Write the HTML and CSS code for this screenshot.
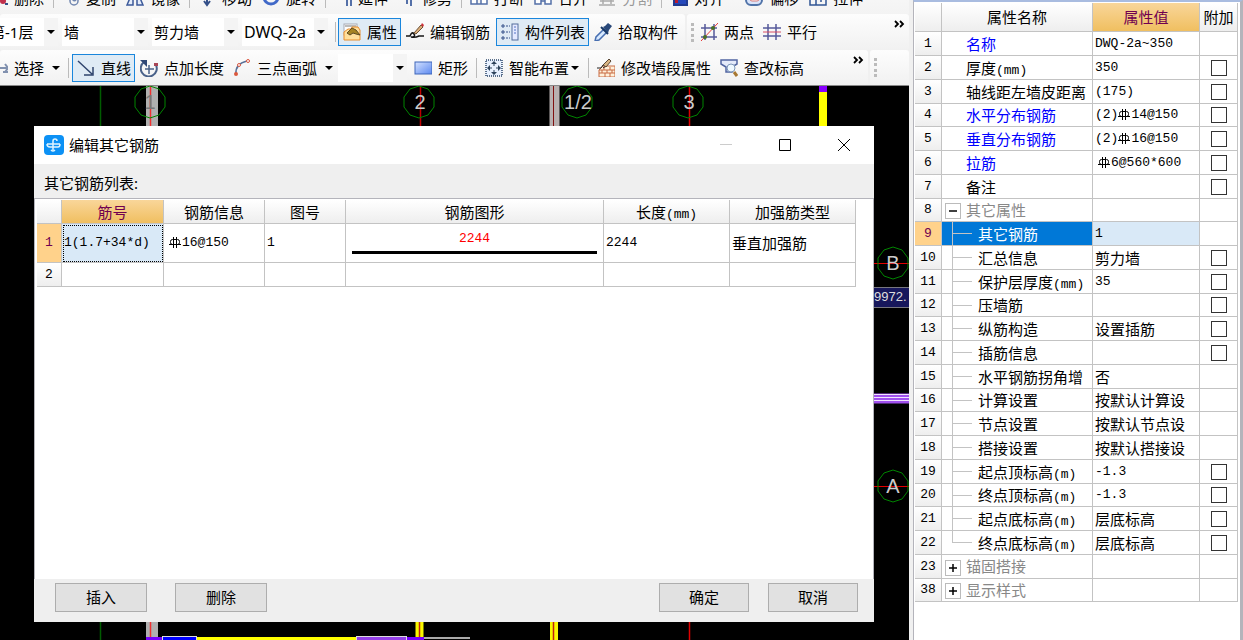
FILE: index.html
```html
<!DOCTYPE html>
<html lang="zh-CN">
<head>
<meta charset="utf-8">
<title>编辑其它钢筋</title>
<link rel="stylesheet" href="styles.css">
</head>
<body>
<svg class="defs" aria-hidden="true">
  <symbol id="rebar" viewBox="0 0 12 12"><path d="M4.500 1V12M7.500 1V12M0 8.500H12" fill="none" stroke="currentColor"/><rect x="1.500" y="3.500" width="9" height="5" rx="2" fill="none" stroke="currentColor"/></symbol>
  <symbol id="more" viewBox="0 0 12 8"><path d="M1 1l3 3-3 3M6 1l3 3-3 3" fill="none" stroke="#000" stroke-width="1.800"/></symbol>
</svg>
<div class="app">
  <main class="workspace">
    <header class="toolbars">
      <div class="clip">
        <div class="bar bar-edit">
          <button class="tool"><svg class="icon" viewBox="0 0 18 18"><path d="M4 3l9 9" stroke="#345089" stroke-width="2"/><circle cx="13" cy="12" r="3" fill="#c0304c"/><path d="M15 14h3v2h-3z" fill="#345089"/></svg>删除</button>
          <span class="sep"></span>
          <button class="tool"><svg class="icon" viewBox="0 0 18 18"><path d="M8 5a4 4 0 0 1 8 0v7a4 4 0 0 1-8 0zM11 7v4a2 2 0 0 0 3 0" fill="none" stroke="#7187b0" stroke-width="1.500"/></svg>复制</button>
          <button class="tool"><svg class="icon" viewBox="0 0 18 18"><path d="M7 2v14H1zM11 2v14h6z" fill="#e4ecfa" stroke="#3c5a9a" stroke-width="1.500"/></svg>镜像</button>
          <span class="sep"></span>
          <button class="tool"><svg class="icon" viewBox="0 0 18 18"><path d="M9 0v16M6 12l3 4 3-4" fill="none" stroke="#345089" stroke-width="2"/></svg>移动</button>
          <button class="tool"><svg class="icon" viewBox="0 0 18 18"><circle cx="9" cy="8" r="7" fill="none" stroke="#4169c8" stroke-width="3"/></svg>旋转</button>
          <span class="sep"></span>
          <button class="tool"><svg class="icon" viewBox="0 0 18 18"><path d="M13 2v15M17 2v15" stroke="#5470a8" stroke-width="2"/></svg>延伸</button>
          <button class="tool"><svg class="icon" viewBox="0 0 18 18"><path d="M9 2v13M13 2v15" stroke="#5470a8" stroke-width="2"/></svg>修剪</button>
          <span class="sep"></span>
          <button class="tool"><svg class="icon" viewBox="0 0 18 18"><path d="M1 5h6v10H1zM11 5h6v10h-6zM7 15h4" fill="#fff" stroke="#5470a8" stroke-width="1.500"/></svg>打断</button>
          <button class="tool"><svg class="icon" viewBox="0 0 18 18"><path d="M1 5h6v10H1zM11 5h6v10h-6zM7 12h4" fill="#fff" stroke="#5470a8" stroke-width="1.500"/></svg>合并</button>
          <button class="tool" disabled><svg class="icon" viewBox="0 0 18 18"><path d="M1 16h16M2 12h14M5 5v10M13 5v10" stroke="#aaa" stroke-width="1.500"/></svg>分割</button>
          <span class="sep"></span>
          <button class="tool"><svg class="icon" viewBox="0 0 18 18"><path d="M4 2v14h13V2z" fill="#fff" stroke="#203a90" stroke-width="2"/><path d="M5 11h11v4H5z" fill="#2548bb"/><path d="M5 2h3v12H5z" fill="#b81c30"/></svg>对齐</button>
          <button class="tool gap"><svg class="icon" viewBox="0 0 18 18"><rect x="1" y="4" width="16" height="12" rx="5" fill="#d9e4fa" stroke="#5073a8" stroke-width="2"/><rect x="5" y="7" width="9" height="5" rx="2" fill="#fff" stroke="#d87a78"/></svg>偏移</button>
          <button class="tool"><svg class="icon" viewBox="0 0 18 18"><path d="M1 3v13h16V3M7 10v6M12 9v4" fill="none" stroke="#315694" stroke-width="1.500"/></svg>拉伸</button>
        </div>
      </div>

      <div class="bar bar-build">
        <div class="strip">
          <label class="combo combo-floor"><select aria-label="楼层"><option>第-1层</option></select></label>
          <label class="combo"><select aria-label="类别"><option>墙</option></select></label>
          <label class="combo"><select aria-label="类型"><option>剪力墙</option></select></label>
          <label class="combo combo-latin"><select aria-label="构件"><option>DWQ-2a</option></select></label>
          <span class="sep"></span>
          <button class="tool on"><svg class="icon" viewBox="0 0 18 18"><rect x="1" y="1" width="13" height="11" fill="#fff" stroke="#a8abb5"/><path d="M2 3h11" stroke="#bbb" stroke-width="2"/><path d="M1 9l4-3h3l1-2h6l2 3v10H1z" fill="#ffdf9c" stroke="#e78d2f"/><path d="M4 10l5-5 4 2 4 5-4-1-3-1-3 2z" fill="#a68322" stroke="#604b23"/></svg>属性</button>
          <button class="tool"><svg class="icon" viewBox="0 0 18 18"><path d="M0 13h4q2-5 4-2t-3 3q4 1 8-1h5" fill="none" stroke="#171717" stroke-width="1.500"/><path d="M8 10l7-8 2 2-7 7z" fill="#dcae79" stroke="#6b5138"/><path d="M15 2l1-2 2 2-1 2z" fill="#cd3038"/></svg>编辑钢筋</button>
          <button class="tool on"><svg class="icon" viewBox="0 0 18 18"><path d="M1 2h2v2H1zM1 8h2v2H1zM1 14h2v2H1z" fill="none" stroke="#345089"/><path d="M5 3h4M5 9h4M5 15h4" stroke="#345089" stroke-dasharray="2 1"/><rect x="11" y="1" width="6" height="16" fill="#e3e9ff" stroke="#526d9c"/><path d="M13 4h2M13 7h2M13 10h2" stroke="#5372c4"/></svg>构件列表</button>
          <button class="tool"><svg class="icon" viewBox="0 0 18 18"><path d="M10 6l3 3-8 8-4 1 1-4z" fill="#d7e9ff" stroke="#476eb0" stroke-width="1.500"/><path d="M9 4l2-1 3-3 4 3-3 4-1 3z" fill="#294879"/><path d="M7 4l7 7" stroke="#183866" stroke-width="2"/></svg>拾取构件</button>
        </div>
        <div class="strip strip-axis">
          <span class="grip"></span>
          <button class="tool"><svg class="icon" viewBox="0 0 18 18"><path d="M5 1v16M14 1v16M1 5h16M1 14h16" stroke="#555a9b" stroke-width="1.500"/><path d="M1 18L18 0" stroke="#e53939"/><circle cx="5" cy="14" r="2" fill="#477029"/><circle cx="13" cy="5" r="2" fill="#477029"/></svg>两点</button>
          <button class="tool"><svg class="icon" viewBox="0 0 18 18"><path d="M5 1v16M13 1v16M0 5h18M0 13h18" stroke="#555a9b" stroke-width="1.500"/><path d="M0 9h18" stroke="#d64d64"/></svg>平行</button>
          <button class="more" aria-label="更多"><svg class="more-icon"><use href="#more"/></svg></button>
        </div>
      </div>

      <div class="bar bar-draw">
        <div class="strip strip-draw">
          <button class="tool tool-cut"><svg class="icon" viewBox="0 0 18 18"><path d="M7 9h10M15 5l3 4-3 4M13 13h5" fill="none" stroke="#8191af" stroke-width="2"/></svg>选择</button>
          <span class="arrow arrow-wide"></span>
          <span class="sep"></span>
          <button class="tool on"><svg class="icon" viewBox="0 0 18 18"><path d="M1 2l14 13M16 8v8H7" fill="none" stroke="#31456e" stroke-width="1.500"/></svg>直线</button>
          <button class="tool"><svg class="icon" viewBox="0 0 18 18"><path d="M4 3a8 8 0 1 0 12 3" fill="none" stroke="#496189" stroke-width="2"/><path d="M0 1h7v7z" fill="#304976"/><path d="M9 6v9M5 10h9" stroke="#496189" stroke-width="1.500"/><path d="M14 4h4v3h-4z" fill="#a94555"/></svg>点加长度</button>
          <button class="tool"><svg class="icon" viewBox="0 0 18 18"><path d="M3 15Q2 5 14 2" fill="none" stroke="#5a7198" stroke-width="1.500"/><circle cx="3" cy="15" r="2" fill="#db583d"/><circle cx="6" cy="6" r="1.500" fill="#fff" stroke="#d95640"/><circle cx="15" cy="2" r="1.500" fill="#fff" stroke="#d95640"/></svg>三点画弧</button>
          <span class="arrow arrow-wide"></span>
          <label class="combo combo-short"><select aria-label="画弧方式"><option></option></select></label>
          <button class="tool"><svg class="icon" viewBox="0 0 18 18"><defs><linearGradient id="blue" x2="1" y2="1"><stop stop-color="#d4e2ff"/><stop offset="1" stop-color="#5b88f0"/></linearGradient></defs><rect x="1" y="3" width="17" height="12" fill="url(#blue)" stroke="#3e66ba"/></svg>矩形</button>
          <span class="sep"></span>
          <button class="tool"><svg class="icon" viewBox="0 0 18 18"><rect x="1" y="1" width="16" height="16" fill="#e8f1ff" stroke="#294469" stroke-width="1.500" stroke-dasharray="1 1"/><path d="M9 3v4M9 11v4M3 9h4M11 9h4" stroke="#2c425b"/><path d="M9 2l3 3H6zM9 16l3-3H6zM2 9l3-3v6zM16 9l-3-3v6z" fill="#2c425b"/></svg>智能布置</button>
          <span class="arrow arrow-tight"></span>
          <span class="sep"></span>
          <button class="tool"><svg class="icon" viewBox="0 0 18 18"><path d="M2 11l4-4h12v11H2z" fill="#fff0da" stroke="#c76a43"/><path d="M2 11h16M2 14h16M7 8v3M13 8v3M5 11v3M10 11v3M15 11v3M8 14v4M13 14v4" stroke="#c76a43"/><path d="M0 9h4l2-3 3 1-3 2" fill="none" stroke="#222"/><path d="M6 6l6-6 2 2-5 6z" fill="#d9b584" stroke="#594733"/></svg>修改墙段属性</button>
          <button class="tool"><svg class="icon" viewBox="0 0 18 18"><path d="M1 1h16v4l-5 3v5H6V8L1 5z" fill="#e4eafa" stroke="#5266a2" stroke-width="1.500"/><circle cx="11" cy="9" r="4" fill="#eef8ff" stroke="#7d97b9"/><path d="M14 13l3 4" stroke="#a77832" stroke-width="3"/></svg>查改标高</button>
          <button class="more" aria-label="更多"><svg class="more-icon"><use href="#more"/></svg></button>
        </div>
        <div class="strip strip-end"><span class="grip"></span></div>
      </div>
    </header>

    <section class="canvas">
      <svg class="drawing">
        <defs><polygon id="bubble" points="0,-16 9,-13 15,-5 15,5 9,13 0,16 -9,13 -15,5 -15,-5 -9,-13" fill="none" stroke="#008500"/></defs>
        <path d="M100.500 0V554" stroke="#005c00" stroke-width="1.500"/>
        <path d="M152 0V554" stroke="#b0b0b0" stroke-width="12"/>
        <path d="M150.500 0V554" stroke="#f03030" stroke-width="1.500"/>
        <path d="M554.500 0V90" stroke="#b8b0b0" stroke-width="10"/>
        <path d="M553.500 0V90" stroke="#801010"/>
        <path d="M420.500 0V500" stroke="#c00000" stroke-width="1.500"/>
        <path d="M689.500 0V554" stroke="#e00000" stroke-width="1.500"/>
        <path d="M823 0V90" stroke="#ffff00" stroke-width="8"/><path d="M823 0V6" stroke="#8800ff" stroke-width="8"/>
        <use href="#bubble" x="150" y="16"/><use href="#bubble" x="419" y="16"/><use href="#bubble" x="577" y="16"/><use href="#bubble" x="688" y="16"/>
        <path d="M874 177.500H909M874 400.500H909" stroke="#e00000"/>
        <use href="#bubble" x="893" y="177"/><use href="#bubble" x="893" y="400"/>
        <g class="axis"><text x="150" y="23" class="dim">1</text><text x="420" y="23">2</text><text x="578" y="23">1/2</text><text x="689" y="23">3</text><text x="893" y="184">B</text><text x="893" y="407">A</text></g>
        <rect x="860" y="201.500" width="60" height="20" fill="#17175c" stroke="#77777f"/>
        <text x="874" y="215" class="coord">9972.</text>
        <path d="M860 312.500H909" stroke="#a050ee" stroke-width="10"/><path d="M860 308.500H909M860 311.500H909M860 314.500H909" stroke="#f2e4ff"/>
        <path d="M419.500 500V554M554 500V554" stroke="#f8f800" stroke-width="8"/><path d="M419.500 500V554M553.500 500V554" stroke="#c02010" stroke-width="1.500"/>
        <path d="M146 552.500H162M406 552.500H424" stroke="#7600ff" stroke-width="3"/>
        <path d="M197 552.500H356" stroke="#ffff00" stroke-width="3"/>
        <path d="M424 552H470" stroke="#aaa" stroke-width="2"/>
        <rect x="162.500" y="550.500" width="34" height="5" fill="#0000ff" stroke="#ddd"/><rect x="356.500" y="550.500" width="50" height="5" fill="#9440e8" stroke="#ddd"/>
      </svg>

      <div class="dialog" role="dialog" aria-labelledby="dialog-title">
        <div class="titlebar">
          <svg class="logo" viewBox="0 0 20 20"><rect width="20" height="20" rx="4" fill="#0c91f5"/><path d="M9 15V6q0-2 2-2t2 2M3 9h13M3 9q0 3 3 3h8q2 0 2-3M7 15q2 2 4 0" fill="none" stroke="#dff4ff" stroke-width="1.500"/></svg>
          <h1 class="title" id="dialog-title">编辑其它钢筋</h1>
          <button class="win" aria-label="最小化" disabled><svg class="win-icon" viewBox="0 0 14 14"><path d="M1 6.500h12" stroke="#ccc"/></svg></button>
          <button class="win" aria-label="最大化"><svg class="win-icon" viewBox="0 0 14 14"><path d="M1.500 1.500h11v11h-11z" fill="none" stroke="#000"/></svg></button>
          <button class="win" aria-label="关闭"><svg class="win-icon" viewBox="0 0 14 14"><path d="M1 1l12 12M13 1L1 13" stroke="#000"/></svg></button>
        </div>
        <p class="caption">其它钢筋列表:</p>
        <div class="list">
          <table class="grid bars">
            <colgroup><col class="c-no"><col class="c-id"><col class="c-info"><col class="c-fig"><col class="c-shape"><col class="c-len"><col class="c-type"></colgroup>
            <thead><tr><th></th><th class="current">筋号</th><th>钢筋信息</th><th>图号</th><th>钢筋图形</th><th>长度<span class="mono">(mm)</span></th><th>加强筋类型</th></tr></thead>
            <tbody>
              <tr class="tall"><th class="picked">1</th><td class="mono focus">1(1.7+34*d)</td><td class="mono indent"><svg class="rebar"><use href="#rebar"/></svg>16@150</td><td class="mono">1</td><td class="shape"><span class="mono length">2244</span></td><td class="mono">2244</td><td>垂直加强筋</td></tr>
              <tr><th>2</th><td></td><td></td><td></td><td></td><td></td><td></td></tr>
            </tbody>
          </table>
        </div>
        <div class="actions">
          <button class="push">插入</button><button class="push">删除</button>
          <button class="push push-ok">确定</button><button class="push push-cancel">取消</button>
        </div>
      </div>
    </section>
  </main>

  <aside class="props">
    <table class="grid attrs">
      <colgroup><col class="a-no"><col class="a-name"><col class="a-value"><col class="a-add"></colgroup>
      <thead><tr><th></th><th>属性名称</th><th class="current">属性值</th><th>附加</th></tr></thead>
      <tbody>
        <tr><th>1</th><td class="name key">名称</td><td class="mono">DWQ-2a~350</td><td></td></tr>
        <tr><th>2</th><td class="name">厚度<span class="mono">(mm)</span></td><td class="mono">350</td><td class="add"><input type="checkbox" aria-label="厚度"></td></tr>
        <tr><th>3</th><td class="name">轴线距左墙皮距离</td><td class="mono">(175)</td><td class="add"><input type="checkbox" aria-label="轴线距左墙皮距离"></td></tr>
        <tr><th>4</th><td class="name key">水平分布钢筋</td><td class="mono">(2)<svg class="rebar"><use href="#rebar"/></svg>14@150</td><td class="add"><input type="checkbox" aria-label="水平分布钢筋"></td></tr>
        <tr><th>5</th><td class="name key">垂直分布钢筋</td><td class="mono">(2)<svg class="rebar"><use href="#rebar"/></svg>16@150</td><td class="add"><input type="checkbox" aria-label="垂直分布钢筋"></td></tr>
        <tr><th>6</th><td class="name key">拉筋</td><td class="mono indent"><svg class="rebar"><use href="#rebar"/></svg>6@560*600</td><td class="add"><input type="checkbox" aria-label="拉筋"></td></tr>
        <tr><th>7</th><td class="name">备注</td><td></td><td class="add"><input type="checkbox" aria-label="备注"></td></tr>
        <tr><th>8</th><td class="group"><button class="fold" aria-label="折叠"><svg class="fold-icon" viewBox="0 0 14 14"><path d="M3 7h8" stroke="#000" stroke-width="1.500"/></svg></button>其它属性</td><td></td><td></td></tr>
        <tr class="selected"><th class="picked">9</th><td class="leaf">其它钢筋</td><td class="mono">1</td><td></td></tr>
        <tr><th>10</th><td class="leaf">汇总信息</td><td>剪力墙</td><td class="add"><input type="checkbox" aria-label="汇总信息"></td></tr>
        <tr><th>11</th><td class="leaf">保护层厚度<span class="mono">(mm)</span></td><td class="mono">35</td><td class="add"><input type="checkbox" aria-label="保护层厚度"></td></tr>
        <tr><th>12</th><td class="leaf">压墙筋</td><td></td><td class="add"><input type="checkbox" aria-label="压墙筋"></td></tr>
        <tr><th>13</th><td class="leaf">纵筋构造</td><td>设置插筋</td><td class="add"><input type="checkbox" aria-label="纵筋构造"></td></tr>
        <tr><th>14</th><td class="leaf">插筋信息</td><td></td><td class="add"><input type="checkbox" aria-label="插筋信息"></td></tr>
        <tr><th>15</th><td class="leaf">水平钢筋拐角增</td><td>否</td><td></td></tr>
        <tr><th>16</th><td class="leaf">计算设置</td><td>按默认计算设</td><td></td></tr>
        <tr><th>17</th><td class="leaf">节点设置</td><td>按默认节点设</td><td></td></tr>
        <tr><th>18</th><td class="leaf">搭接设置</td><td>按默认搭接设</td><td></td></tr>
        <tr><th>19</th><td class="leaf">起点顶标高<span class="mono">(m)</span></td><td class="mono">-1.3</td><td class="add"><input type="checkbox" aria-label="起点顶标高"></td></tr>
        <tr><th>20</th><td class="leaf">终点顶标高<span class="mono">(m)</span></td><td class="mono">-1.3</td><td class="add"><input type="checkbox" aria-label="终点顶标高"></td></tr>
        <tr><th>21</th><td class="leaf">起点底标高<span class="mono">(m)</span></td><td>层底标高</td><td class="add"><input type="checkbox" aria-label="起点底标高"></td></tr>
        <tr><th>22</th><td class="leaf last">终点底标高<span class="mono">(m)</span></td><td>层底标高</td><td class="add"><input type="checkbox" aria-label="终点底标高"></td></tr>
        <tr><th>23</th><td class="group"><button class="fold" aria-label="展开"><svg class="fold-icon" viewBox="0 0 14 14"><path d="M3 7h8M7 3v8" stroke="#000" stroke-width="1.500"/></svg></button>锚固搭接</td><td></td><td></td></tr>
        <tr><th>38</th><td class="group"><button class="fold" aria-label="展开"><svg class="fold-icon" viewBox="0 0 14 14"><path d="M3 7h8M7 3v8" stroke="#000" stroke-width="1.500"/></svg></button>显示样式</td><td></td><td></td></tr>
      </tbody>
    </table>
  </aside>
</div>
</body>
</html>
```
FILE: styles.css
```css
* { box-sizing: border-box; }
html, body { height: 100%; }
body {
  margin: 0;
  overflow: hidden;
  font: 15px/20px "Noto Sans", "Noto Sans CJK SC", sans-serif;
  color: #000;
  background: #f0f0f0;
}
button, select { font: inherit; color: inherit; }
.defs { display: none; }
.app { display: flex; height: 100%; }
.workspace { flex: 1; min-width: 0; display: flex; flex-direction: column; }

/* toolbars */
.toolbars { background: #f0f0f0; white-space: nowrap; overflow: hidden; border-bottom: 1px solid #888; }
.clip { height: 14px; display: flex; flex-direction: column; justify-content: flex-end; overflow: hidden; }
.bar { display: flex; align-items: center; flex: none; }
.bar-edit { height: 32px; gap: 1px; margin-left: -15px; background: linear-gradient(#fafafa, #f3f3f3); }
.bar-build { height: 36px; gap: 2px; }
.bar-draw { height: 35px; gap: 2px; }
.strip { display: flex; align-items: center; height: 100%; background: linear-gradient(#fdfdfd, #f1f1f1); border-radius: 3px; }
.strip-axis { flex: 1; padding-left: 2px; }
.strip-draw { flex: 1; }
.strip-end { width: 39px; padding-left: 2px; }
.tool {
  flex: none;
  display: flex;
  align-items: center;
  gap: 6px;
  height: 28px;
  padding: 0 3px 0 4px;
  border: 1px solid transparent;
  background: none;
}
.tool:disabled { color: #999; }
.tool.on { border-color: #1a86dc; background: #dfebf5; }
.tool.gap { margin-left: 11px; }
.tool-cut { margin-left: -15px; }
.bar-build .strip:first-child { padding-right: 3px; }
.bar-build .on + .tool { margin-right: 2px; }
.bar-build .tool:last-child { margin-right: 0; }
.icon { width: 18px; height: 18px; flex: none; }
.sep { flex: none; width: 1px; height: 20px; margin: 0 3px 0 4px; background: #bbb; }
.bar-edit .sep { margin: 0 2px 0 4px; }
.bar-build .sep { margin: 0 2px 0 7px; }
.grip { flex: none; width: 3px; height: 19px; margin: 0 1px 0 2px; border-left: 3px dotted #bbb; }
.more { align-self: flex-start; margin-left: auto; padding: 6px 3px; border: 0; background: none; display: flex; }
.more-icon { width: 12px; height: 8px; }
.arrow { flex: none; width: 0; height: 0; border: 4px solid transparent; border-top-color: #000; border-bottom: 0; }
.arrow-wide { margin: 0 4px; }
.arrow-tight { margin: 0 5px 0 -2px; }
.combo { flex: none; position: relative; width: 86px; height: 28px; margin-left: 4px; background: #fff; }
.combo-floor { width: 70px; margin-left: -12px; }
.combo-latin { font-size: 16px; }
.combo-short { width: 69px; margin: 0 2px 0 1px; }
.combo select { appearance: none; width: 100%; height: 100%; padding: 0 14px 0 2px; border: 0; background: linear-gradient(#f4f4f4, #f4f4f4) right / 14px 100% no-repeat; }
.combo::after { content: ""; position: absolute; right: 3px; top: 12px; border: 4px solid transparent; border-top-color: #000; border-bottom: 0; }

/* drawing area */
.canvas { flex: 1; min-height: 0; position: relative; overflow: hidden; background: #000; }
.drawing { display: block; width: 100%; height: 100%; }
.axis { font: 20px "Liberation Sans", sans-serif; fill: #ccc; text-anchor: middle; }
.dim { fill: #777; }
.coord { font: 13px "Liberation Sans", sans-serif; fill: #ddd; }

/* dialog window */
.dialog { position: absolute; left: 34px; right: 35px; top: 40px; bottom: 18px; display: flex; flex-direction: column; background: #efefef; }
.titlebar { display: flex; align-items: center; height: 38px; padding: 0 1px 1px 10px; background: #fff; }
.logo { width: 20px; height: 20px; }
.title { margin: 0 auto 0 5px; font: inherit; }
.win { display: flex; justify-content: center; width: 59px; padding: 0; border: 0; background: none; }
.win-icon { width: 14px; height: 14px; }
.caption { margin: 0; padding: 9px 10px 5px; }
.list { flex: 1; padding: 1px 2px; border: 1px solid #b4b4bb; border-bottom: 0; background: #fff; }
.actions { display: flex; gap: 28px; height: 43px; padding: 4px 16px 10px 21px; }
.push { width: 92px; padding: 0 0 2px; border: 1px solid #adadad; background: #e1e1e1; }
.push-ok { width: 90px; margin-left: auto; margin-right: -9px; }
.push-cancel { width: 90px; }

/* data grids */
.grid { border-spacing: 0; table-layout: fixed; white-space: nowrap; }
.grid th, .grid td { padding: 0 0 0 2px; border: solid #c3c3c3; border-width: 0 1px 1px 0; font-weight: normal; line-height: 18px; text-align: left; overflow: hidden; }
.grid th { padding: 0; text-align: center; background: linear-gradient(#fff, #eee); }
.grid tbody th { font: 13px/18px "Liberation Mono", monospace; }
.grid .current { color: #700050; background: linear-gradient(#f9d69a, #f0bf60); }
.grid .picked { color: #700050; background: #ffd28b; }
.grid .mono { font-family: "Liberation Mono", monospace; font-size: 13px; }
.grid span.mono { line-height: 12px; }
.grid .indent { padding-left: 5px; }
.rebar { width: 12px; height: 12px; margin-right: 1px; vertical-align: -2px; }

.bars { width: 819px; }
.c-no { width: 25px; }
.c-id { width: 102px; }
.c-info { width: 101px; }
.c-fig { width: 81px; }
.c-shape { width: 258px; }
.c-len, .c-type { width: 126px; }
.bars tr { height: 24px; }
.bars .tall { height: 39px; }
.grid .focus { background: #d9e9f7; outline: 1px dotted #000; outline-offset: -2px; }
.grid .shape { padding: 0 6px; text-align: center; }
.length { display: block; border-bottom: 3px solid #000; padding-bottom: 6px; color: #f00; }

.props { width: 330px; margin-left: 4px; padding: 1px 2px 0 1px; border: solid #b4b4bb; border-width: 2px 3px 0 1px; border-top-color: #a9bce0; background: #fff; }
.attrs { width: 100%; }
.a-no { width: 27px; }
.a-name { width: 151px; }
.a-value { width: 107px; }
.attrs thead tr { height: 29px; }
.attrs tbody tr { height: 24px; }
.attrs tbody tr:nth-child(4n) { height: 23px; }
.attrs .name { padding-left: 24px; }
.attrs .key { color: #00f; }
.attrs .group { padding-left: 3px; color: #888; }
.attrs .leaf {
  padding-left: 36px;
  background: linear-gradient(#c3c3c3, #c3c3c3) 10px 0 / 1px 100% no-repeat, linear-gradient(#c3c3c3, #c3c3c3) 10px 50% / 20px 1px no-repeat;
}
.attrs .last { background-size: 1px 50%, 20px 1px; }
.attrs .selected .leaf { color: #fff; background-color: #0078d7; }
.attrs .selected .mono { background: #d9e9f7; }
.attrs .add { padding: 0; text-align: center; }
.add input { appearance: none; display: block; width: 16px; height: 16px; margin: 0 auto; border: 1px solid #333; background: #fff; }
.fold { width: 16px; height: 16px; margin-right: 5px; padding: 0; border: 1px solid #bbb; background: #fff; vertical-align: middle; }
.fold-icon { display: block; width: 14px; height: 14px; }
```
